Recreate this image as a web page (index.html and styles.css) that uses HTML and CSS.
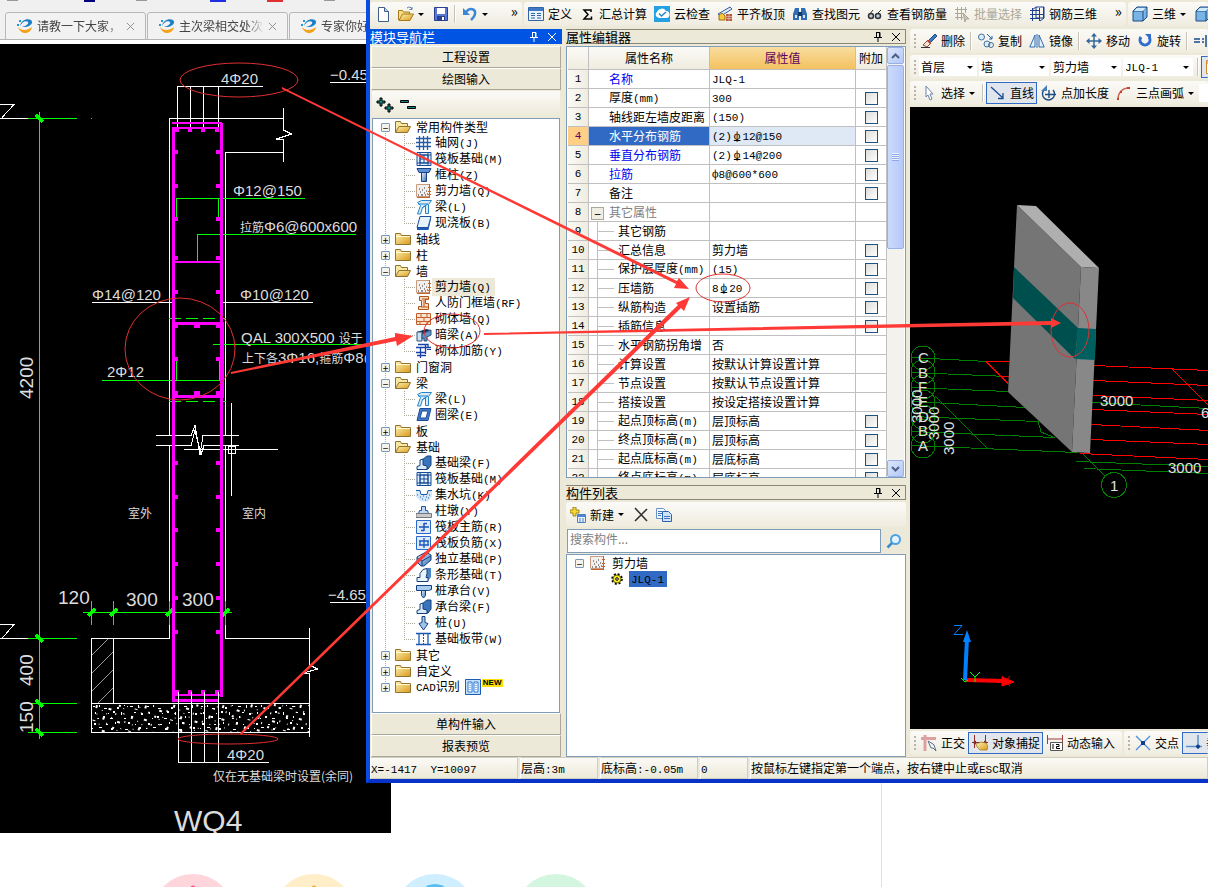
FILE: index.html
```html
<!DOCTYPE html>
<html lang="zh-CN">
<head>
    <meta charset="UTF-8">
    <meta name="viewport" content="width=device-width, initial-scale=1.0">
    <title>WQ4 剪力墙</title>
    <link rel="stylesheet" href="styles.css">
</head>
<body>

    <!-- Icon set -->
    <svg class="defs" width="0" height="0" aria-hidden="true">
        <defs>
            <linearGradient id="gold" x1="0" y1="0" x2="1" y2="1"><stop offset="0" stop-color="#fff3b0"/><stop offset="1" stop-color="#d99a1c"/></linearGradient>
            <linearGradient id="steel" x1="0" y1="0" x2="1" y2="1"><stop offset="0" stop-color="#eef7ff"/><stop offset="1" stop-color="#2c6fb8"/></linearGradient>
            <pattern id="concrete" width="54" height="29" patternUnits="userSpaceOnUse" x="91" y="703">
                <path fill="#fff" d="M2 3h2v1h-2zM8 2h1v2h-1zM13 5h3v1h-3zM26 4h2v2h-2zM33 2h1v1h-1zM39 3h3v1h-3zM47 2h1v3h-1zM4 9h1v2h-1zM17 10h1v1h-1zM22 8h2v2h-2zM30 9h1v3h-1zM43 9h2v1h-2zM50 10h2v2h-2zM7 15h1v1h-1zM12 13h2v2h-2zM19 15h3v1h-3zM33 15h2v1h-2zM40 13h1v2h-1zM3 20h2v2h-2zM15 21h2v1h-2zM24 19h1v2h-1zM37 19h2v2h-2zM44 21h1v1h-1zM1 25h1v1h-1zM8 24h3v1h-3zM20 25h2v2h-2zM34 26h3v1h-3zM48 24h2v2h-2z"/>
            </pattern>
            <pattern id="gravel" width="37" height="23" patternUnits="userSpaceOnUse" patternTransform="rotate(17)">
                <path fill="#fff" d="M2 2h2v3h-2zM9 5h1v1h-1zM15 1h3v2h-3zM23 4h1v2h-1zM30 2h2v1h-2zM5 10h1v1h-1zM12 11h2v3h-2zM20 9h1v1h-1zM27 11h3v2h-3zM34 9h1v2h-1zM3 17h3v1h-3zM10 19h1v1h-1zM17 16h1v2h-1zM24 18h2v2h-2zM32 17h1v1h-1zM14 7h1v1h-1zM7 14h1v1h-1zM29 20h1v1h-1z"/>
            </pattern>
            <pattern id="hatch" width="18" height="18" patternUnits="userSpaceOnUse" x="91" y="638">
                <path d="M0 18L18 0" stroke="#999" stroke-width="1"/>
            </pattern>
        </defs>
        <symbol id="i-brand" viewBox="0 0 16 16"><path d="M3 8C4 2 10 0 14 2c3 3-1 7-7 7H5c4-1 7-3 6-5-2-2-6 0-8 4z" fill="#1c7fc8"/><path d="M1 9c3 4 9 4 14 0-1 7-11 9-14 0z" fill="#f5a21b"/><path d="M0 6h2v2h-2zM2 2h2v2h-2z" fill="#1c9ad8"/></symbol>
        <symbol id="i-new" viewBox="0 0 16 16"><path d="M3.500 1.500h6l4 4v10h-10z" fill="#fff" stroke="#3f5f8a"/><path d="M9.500 1.500v4h4" fill="#bcd3ec" stroke="#3f5f8a"/></symbol>
        <symbol id="i-open" viewBox="0 0 16 16"><path d="M.5 14V4.500h4l1 1.500h6v3" fill="#f8df84" stroke="#a77a18"/><path d="M1 14.500L4.500 8h11l-3.500 6.500z" fill="url(#gold)" stroke="#a77a18"/><path d="M9 2c2-1.500 4-1 5 1m0-2v2.500h-2.500" fill="none" stroke="#5b7fa8"/></symbol>
        <symbol id="i-save" viewBox="0 0 16 16"><path d="M1.500 1.500h13v13h-13z" fill="#5a78d8" stroke="#29408f"/><path d="M4 2h8v6H4z" fill="#fff"/><path d="M4 10h8v4H4z" fill="#29408f"/><path d="M9 11h2v3H9z" fill="#fff"/></symbol>
        <symbol id="i-undo" viewBox="0 0 16 16"><path d="M1 2v7h7z" fill="#3a86d8"/><path d="M4 6c4-5 10-3 9 2-.5 3-2 4-4 6" fill="none" stroke="#3a86d8" stroke-width="2.500"/></symbol>
        <symbol id="i-define" viewBox="0 0 16 16"><path d="M.5 1.500h15v13H.5z" fill="#eaf2fb" stroke="#2f65a8"/><path d="M1 2h14v3H1z" fill="#3f78c4"/><path d="M3 7.500h4M3 9.500h4M3 12h4M9 7.500h4M9 9.500h4M9 12h4" stroke="#2f65a8"/></symbol>
        <symbol id="i-sigma" viewBox="0 0 16 16"><path d="M12 6V4H5l4 4.500L5 13h7.500v-2.500" fill="none" stroke="#000" stroke-width="1.500"/></symbol>
        <symbol id="i-cloud" viewBox="0 0 16 16"><path d="M0 0h16v16H0z" fill="#25a0e0"/><path d="M3 11a3 3 0 0 1 0-5 5 5 0 0 1 9-1 3.500 3.500 0 0 1 0 7H5z" fill="#fff"/><path d="M5 7.500l2.500 2.500L12 6" fill="none" stroke="#2a86c0" stroke-width="1.500"/></symbol>
        <symbol id="i-align" viewBox="0 0 16 16"><path d="M1 8L13 1l2 2L4 10z" fill="#dce9f8" stroke="#355f9a"/><path d="M2 14V9l3-2 3 3v4z" fill="#f3c83a" stroke="#9a6e10"/><path d="M9 8h6v7H9z" fill="#b9583c"/><path d="M9 10.500h6M9 12.500h6M12 8v7" stroke="#f2d2c4" stroke-width=".6"/></symbol>
        <symbol id="i-find" viewBox="0 0 16 16"><path d="M3 2h4v12H1V8zM13 2H9v12h6V8z" fill="#2f6cb4"/><path d="M6 6h4v4H6z" fill="#16375f"/><path d="M3 9h2v3H3zM11 9h2v3h-2z" fill="#d6e8fa"/></symbol>
        <symbol id="i-glasses" viewBox="0 0 16 16"><path d="M2 9l4-5M10 8l4-4" stroke="#333"/><circle cx="4" cy="10" r="2.500" fill="#bcd" stroke="#333" stroke-width="1.500"/><circle cx="11" cy="10" r="2.500" fill="#bcd" stroke="#333" stroke-width="1.500"/></symbol>
        <symbol id="i-batch" viewBox="0 0 16 16"><path d="M1 3.500h12M1 7.500h8M1 11.500h8M3.500 1v13M7.500 1v13M11.500 1v6" stroke="#aca899"/><path d="M9 7l6 6h-3l-1 3z" fill="#c8c4b4" stroke="#aca899"/></symbol>
        <symbol id="i-rebar" viewBox="0 0 16 16"><path d="M1 4.500h10M1 8.500h14M1 12.500h10M3.500 2v13M10.500 2v13M3 4l4-3h8v11l-4 3M14.500 1v11M7 1v11h8" fill="none" stroke="#1d3f8f"/></symbol>
        <symbol id="i-cube" viewBox="0 0 16 16"><path d="M1 5l4-4h10v10l-4 4H1z" fill="#78b4e6" stroke="#1d4d80"/><path d="M1 5h10v10M11 5l4-4" fill="none" stroke="#1d4d80"/><path d="M2 5l3-3h9l-3 3z" fill="#cfe8fa"/></symbol>
        <symbol id="i-pin" viewBox="0 0 10 10"><path d="M3 .5h4v5M3.500.5v5M1 5.500h8M5 6v4" fill="none" stroke="currentColor"/><path d="M6 1h1v4H6z" fill="currentColor"/></symbol>
        <symbol id="i-x" viewBox="0 0 10 10"><path d="M1 1l8 8M9 1L1 9" stroke="currentColor"/></symbol>
        <symbol id="i-folder" viewBox="0 0 16 16"><path d="M.5 13.500v-11h5l1 2h9v9z" fill="url(#gold)" stroke="#8f7430"/><path d="M1 5.500h14" stroke="#fff8d0"/></symbol>
        <symbol id="i-folder-open" viewBox="0 0 16 16"><path d="M.5 13.500v-11h5l1 2h6v3" fill="#f8e7a0" stroke="#8f7430"/><path d="M.5 13.500L4 7.500h11.500l-3 6z" fill="url(#gold)" stroke="#8f7430"/></symbol>
        <symbol id="i-grid" viewBox="0 0 16 16"><path d="M0 3.500h15M0 7.500h15M0 11.500h15M3.500 1v14M7.500 1v14M11.500 1v14" stroke="#255ca8" stroke-width="1.300"/></symbol>
        <symbol id="i-raft" viewBox="0 0 16 16"><path d="M1 1.500h14v13H1zM4 4h8v8H4zM4 1v14M12 1v14M1 4h14M1 12h14M8 4v8M4 8h8" fill="#e5f1fc" stroke="#174a94"/></symbol>
        <symbol id="i-column" viewBox="0 0 16 16"><path d="M1 1.500h14l-2 4H3z" fill="#5c93d6" stroke="#1c3f84"/><path d="M5.500 5.500h5v9h-5z" fill="url(#steel)" stroke="#1c3f84"/></symbol>
        <symbol id="i-wall" viewBox="0 0 16 16"><path d="M.5 1.500h13v12H.5z" fill="#f3efec" stroke="#c89c80"/><path d="M2 12h1M4 9h1M5 12h2M8 10h1M6 7h1M9 12h1M3 6h1M11 11h1M10 8h1M8 5h1" stroke="#333"/><path d="M1 14.500h13M13.500 1v14M12 4.500h3M12 8.500h3M12 11.500h3" stroke="#c4602c"/></symbol>
        <symbol id="i-beam" viewBox="0 0 16 16"><path d="M1.500 3.500l4-2h10l-3 4v9h-3v-8l-3 2-2 6.500h-3l3-8.500z" fill="#d7ecfb" stroke="#2384c8"/><path d="M2 5h10M6 9l6-4" stroke="#2384c8"/></symbol>
        <symbol id="i-slab" viewBox="0 0 16 16"><path d="M4 1.500h11l-3 11H1z" fill="#e6f2fc" stroke="#1d4d9a"/><path d="M1 13h11l3-11v2l-2.500 11H1z" fill="#1d5cb8"/></symbol>
        <symbol id="i-ring" viewBox="0 0 16 16"><path d="M4 1.500h11l-3 12H1z" fill="#3f7cc8" stroke="#1d4d9a"/><path d="M6 4h6l-2 7H4z" fill="#fff" stroke="#1d4d9a"/></symbol>
        <symbol id="i-gate" viewBox="0 0 16 16"><path d="M3.500 1.500h9v3h-3v4h3v6h-10v-3h3v-6h-2z" fill="#fbdcc0" stroke="#b0561c"/><path d="M6 4h6M5 12h7M8 5v7" stroke="#b0561c"/></symbol>
        <symbol id="i-brick" viewBox="0 0 16 16"><path d="M.5 2.500h14v11H.5z" fill="#fbe3cf" stroke="#c4602c"/><path d="M1 6.500h14M1 10.500h14M5 2v4M11 2v4M8 6v4M4 10v4M11 10v4" stroke="#c4602c"/></symbol>
        <symbol id="i-hidden" viewBox="0 0 16 16"><path d="M1 5l9-3 5 1-9 4z" fill="#16335e"/><path d="M1 5h5v9H1z" fill="#cfe2f4" stroke="#2c527f"/><path d="M6 7l9-4v5l-4 2v4H8v-3l-2 1z" fill="#5f92c6" stroke="#2c527f"/></symbol>
        <symbol id="i-tie" viewBox="0 0 16 16"><path d="M0 4.500h15M0 9.500h10M4.500 4v11M9.500 1v10M2 1.500h10v3M1 12.500h9" fill="none" stroke="#1740a8" stroke-width="1.300"/><path d="M11 6.500h4" stroke="#1740a8"/></symbol>
        <symbol id="i-found" viewBox="0 0 16 16"><path d="M6 14V5l5-4h4v9l-3 4z" fill="#3874bc" stroke="#163f7c"/><path d="M1 14.500v-3l3-1V5l3-1v6l4 1v3.500z" fill="#d9ebfa" stroke="#163f7c"/></symbol>
        <symbol id="i-pit" viewBox="0 0 16 16"><path d="M0 3.500h4l1 4h6l1-4h4v6l-4 5H5l-5-5z" fill="#d4e8fa"/><path d="M0 3.500h4l1 4h6l1-4h4" fill="none" stroke="#1c5ca8"/><path d="M1 8h1M4 10h1M7 9h1M10 10h1M13 8h1M6 12h1M9 13h1M12 11h1" stroke="#1c5ca8"/></symbol>
        <symbol id="i-pier" viewBox="0 0 16 16"><path d="M5.500 3.500h4v4h2l1 3h-10l1-3h2z" fill="#bcd8f4" stroke="#1d56a0"/><path d="M0 10.500h15.500v4H0z" fill="#c9c9c9" stroke="#777"/></symbol>
        <symbol id="i-main" viewBox="0 0 16 16"><path d="M.5 1.500h14v13H.5z" fill="#dceafc" stroke="#2a68c8"/><path d="M3 8h10M8 4v8M8 4.500h3M5 11.500h3" stroke="#1b56b8" stroke-width="1.500"/></symbol>
        <symbol id="i-neg" viewBox="0 0 16 16"><path d="M.5 1.500h14v13H.5z" fill="#dceafc" stroke="#2a68c8"/><path d="M3 6h10M3 10h10M8 3v10M4 6v4M12 6v4" stroke="#1b56b8" stroke-width="1.300"/></symbol>
        <symbol id="i-pad" viewBox="0 0 16 16"><path d="M1 6l9-5 5 3v5l-7 6H5L1 11z" fill="url(#steel)" stroke="#163f7c"/><path d="M1 7l5 3 9-5M5 3l4 3M6 10v5" fill="none" stroke="#163f7c"/></symbol>
        <symbol id="i-strip" viewBox="0 0 16 16"><path d="M9 2l3-1h3v9l-3 4z" fill="#4b85c8"/><path d="M1 14.500v-4h3v-4l3-4 4-1v5l-1 4h2v4z" fill="#eaf4fd" stroke="#163f7c"/></symbol>
        <symbol id="i-cap" viewBox="0 0 16 16"><path d="M.5 2.500h15v4l-3 1H.5z" fill="#a8cdf0" stroke="#163f7c"/><path d="M5.500 7.500h4v5l-2 2.500-2-2.500z" fill="url(#steel)" stroke="#163f7c"/></symbol>
        <symbol id="i-pile" viewBox="0 0 16 16"><path d="M6 1.500h3v6l3 1-2 3-2.500 3.500L5 11.500l-2-3 3-1z" fill="#9cc4ec" stroke="#163f7c"/></symbol>
        <symbol id="i-band" viewBox="0 0 16 16"><path d="M0 2.500h15M0 13.500h15M3 3v10M12 3v10" stroke="#1d56b0" stroke-width="1.300"/><path d="M7.500 3v10" stroke="#1d56b0" stroke-dasharray="2 1"/></symbol>
        <symbol id="i-cad" viewBox="0 0 16 16"><path d="M.5.5h15v15H.5z" fill="#c4e0fc" stroke="#1d5cb0"/><path d="M3 3h4v10H3zM9 3h4v10H9z" fill="#fff" stroke="#2d78d0"/><path d="M5 4v8M11 4v8" stroke="#2d78d0" stroke-dasharray="1 1"/></symbol>
        <symbol id="i-add" viewBox="0 0 16 16"><path d="M3 0h3v3h3v3H6v3H3V6H0V3h3z" fill="#f6d830" stroke="#8a7410" stroke-width=".8"/><path d="M7.500 7.500h8v8h-8z" fill="#e8f1fb" stroke="#4d7ec0"/><path d="M8 8h7v2H8z" fill="#4d86d8"/><path d="M9 12h2M12 12h2M9 14h2M12 14h2" stroke="#4d7ec0"/></symbol>
        <symbol id="i-delete" viewBox="0 0 16 16"><path d="M2 1l12 13M14 2L2 14" stroke="#333" stroke-width="1.600"/></symbol>
        <symbol id="i-pages" viewBox="0 0 16 16"><path d="M.5 1.500h7l2 2v8h-9z" fill="#f2f8ff" stroke="#6a94c8"/><path d="M6.500 4.500h6l3 3v7h-9z" fill="#cfe3fa" stroke="#2c62b0"/><path d="M2 4.500h4M2 6.500h4M2 8.500h3M8 9.500h6M8 11.500h6" stroke="#3f76c0"/></symbol>
        <symbol id="i-search" viewBox="0 0 16 16"><circle cx="9.500" cy="6.500" r="4.500" fill="#e4f4ff" stroke="#4ba3e0" stroke-width="2"/><path d="M6 10l-4.500 4.500" stroke="#3c8ad0" stroke-width="2.500"/></symbol>
        <symbol id="i-gear" viewBox="0 0 12 12"><circle cx="6" cy="6" r="4.800" fill="none" stroke="#000" stroke-width="2" stroke-dasharray="2 1.770"/><circle cx="6" cy="6" r="4" fill="#f4ec20" stroke="#6a6400"/><circle cx="6" cy="6" r="1.300" fill="#fff" stroke="#000"/></symbol>
        <symbol id="i-erase" viewBox="0 0 16 16"><path d="M6 9l8-8 2 2-8 8z" fill="#3f76c0" stroke="#234c88"/><path d="M2 12l5-5 3 3-4 4z" fill="#f4e4dc" stroke="#8c4a30"/><path d="M6 8l3 3 1-1-3-3z" fill="#d03c28"/><path d="M0 14.500h9" stroke="#333"/></symbol>
        <symbol id="i-copy" viewBox="0 0 16 16"><circle cx="3.500" cy="4" r="3" fill="#dcecf8" stroke="#45719c"/><circle cx="9" cy="11" r="3" fill="#dcecf8" stroke="#45719c"/><circle cx="13" cy="12" r="2.500" fill="none" stroke="#45719c"/><path d="M9 1l5 5m0-3v3h-3" fill="none" stroke="#2460a8"/></symbol>
        <symbol id="i-mirror" viewBox="0 0 16 16"><path d="M6 2v12H.8zM10 2v12h5.200z" fill="#e4f1fc" stroke="#2f6cb0"/><path d="M8 1v14" stroke="#2f6cb0"/></symbol>
        <symbol id="i-move" viewBox="0 0 16 16"><path d="M8 2v12M2 8h12" stroke="#33679c" stroke-width="1.500"/><path d="M8 0l3 3.500H5zM8 16l3-3.500H5zM0 8l3.500-3v6zM16 8l-3.500-3v6z" fill="#33679c"/></symbol>
        <symbol id="i-rotate" viewBox="0 0 16 16"><path d="M4 4a5 5 0 1 0 8 0" fill="none" stroke="#2f6ccc" stroke-width="3"/><path d="M8 1h6v6z" fill="#2f6ccc"/></symbol>
        <symbol id="i-extend" viewBox="0 0 16 16"><path d="M0 6h6M0 9h6M8 6h2M8 9h2M12 2v12" stroke="#164a8a" stroke-width="1.500"/></symbol>
        <symbol id="i-window" viewBox="0 0 16 16"><path d="M1.500 1.500h14v13h-14z" fill="#fff" stroke="#d8882c"/><path d="M2 2h13v3H2z" fill="#f6b858"/><path d="M4 9h8M4 12h8" stroke="#999"/></symbol>
        <symbol id="i-cursor" viewBox="0 0 16 16"><path d="M5 1l7 8H9l2 5-2 1-2-5-2 2z" fill="#fff" stroke="#6b85a8"/></symbol>
        <symbol id="i-line" viewBox="0 0 16 16"><path d="M1 2l12 11m0-5v5.500H8" fill="none" stroke="#1d4f98" stroke-width="1.300"/></symbol>
        <symbol id="i-length" viewBox="0 0 16 16"><path d="M3 5a6 6 0 1 0 9 0M8 5v8M4 9.500h11" fill="none" stroke="#1d4f88" stroke-width="1.400"/><path d="M0 6h6V0z" fill="#4a80b8"/></symbol>
        <symbol id="i-arc" viewBox="0 0 16 16"><path d="M2 14C2 8 6 3 13 3" fill="none" stroke="#c86a54" stroke-width="1.500"/><path d="M1 13h2v2H1zM4 6h2v2H4zM11 2h3v2h-3z" fill="#c83c28"/></symbol>
        <symbol id="i-ortho" viewBox="0 0 16 16"><path d="M0 3.500h15M4 0v16" stroke="#dca0a0" stroke-width="3"/><path d="M7 6l3 7 2 0 3 3-2-6-1-1z" fill="#eef4fa" stroke="#5c7088"/></symbol>
        <symbol id="i-snap" viewBox="0 0 16 16"><path d="M2.500 0v13M13.500 0v9M0 7.500h16" stroke="#8c2c2c"/><path d="M0 7.500l4-2v4zM16 7.500l-4-2v4z" fill="#8c2c2c"/><path d="M4 9l5-2 5 1 2 3-1 4H8l-3-3z" fill="url(#gold)" stroke="#8c6a18" stroke-width=".6"/></symbol>
        <symbol id="i-dyn" viewBox="0 0 16 16"><path d="M.5 0v9M15.500 0v9M0 4h16" stroke="#a03c3c"/><path d="M3.500 7.500h12v8h-12z" fill="#fff" stroke="#555"/><path d="M6 9v5M9 9.500h3v2H9.500v2H13" fill="none" stroke="#000"/></symbol>
        <symbol id="i-cross" viewBox="0 0 16 16"><path d="M1 1l14 14M15 1L1 15" stroke="#4a90dc" stroke-width="1.300"/><path d="M6 6h4v4H6z" fill="#123f8c"/></symbol>
        <symbol id="i-perp" viewBox="0 0 16 16"><path d="M12 0v14M0 11.500h16" stroke="#5a8ec8" stroke-width="1.500"/><circle cx="12" cy="11.500" r="2" fill="#123f8c"/></symbol>
    </svg>

    <!-- Browser page behind the application -->
    <div class="page">
        <div class="tab-strip">
            <div class="strip-icons"><i></i><i class="navy"></i><i></i><i class="blue"></i><i class="red"></i><i></i></div>
            <div class="tabs">
                <div class="tab"><svg class="icon"><use href="#i-brand"/></svg><span class="tab-title">请教一下大家，这</span><button class="tab-close" aria-label="关闭"><svg width="9" height="9"><use href="#i-x"/></svg></button></div>
                <div class="tab"><svg class="icon"><use href="#i-brand"/></svg><span class="tab-title">主次梁相交处次梁</span><button class="tab-close" aria-label="关闭"><svg width="9" height="9"><use href="#i-x"/></svg></button></div>
                <div class="tab"><svg class="icon"><use href="#i-brand"/></svg><span class="tab-title">专家你好</span><button class="tab-close" aria-label="关闭"><svg width="9" height="9"><use href="#i-x"/></svg></button></div>
            </div>
        </div>

        <!-- Section drawing WQ4 -->
        <svg class="drawing" width="391" height="789" viewBox="0 44 391 789">
            <rect y="44" width="391" height="789" fill="#000"/>
            <g class="white">
                <path d="M0 104.500h14L2 117.500M0 118.500h28M177.500 130V86.500h85M190.500 86v44M203.500 86v44M218.500 86v44"/>
                <path d="M169.500 435V118.500h114M283.500 108v22l8 4-15 5h7v23M225.500 435V152.500h57M169.500 445v193.500h-56M225.500 445v193.500h84M309.500 628v37l8 4-14 4h6v64"/>
                <path d="M92 302.500h81M221 302.500h92M330 82.500h40M330 602.500h40M156 435.500h35l4-10 5 29 3-19h36M156 445.500h35l4-15 6 24 3-9h35"/>
                <path d="M184 449.500h94M231.500 403v93M228.500 446.500h7v7h-7zM0 624.500h14L2 638.500M0 638.500h28M91.500 638.500h22v65M91.500 638v94.500h218M91 703.500h218"/>
            </g>
            <rect x="92" y="639" width="21" height="64" fill="url(#hatch)"/>
            <rect x="92" y="704" width="217" height="28" fill="url(#concrete)"/>
            <rect x="92" y="704" width="217" height="28" fill="url(#gravel)"/>
            <g class="green">
                <path d="M28 118.500h49M91 118.500h1M39.500 112v627M28 638.500h49M28 703.500h49M28 732.500h49M83 612.500h149M91.500 601v24M113.500 601v24M169.500 601v24M225.500 601v24"/>
                <path d="M176.500 218v-19.500h128M218.500 198v20M197.500 262v-27.500h158M213 344.500h157M102 380.500h117v-20M176.500 360v20"/>
                <path stroke-dasharray="12 5" d="M169 318.500h57M169 401.500h57"/>
                <path class="tick" d="M36 115l7 7M36 635l7 7M36 700l7 7M36 729l7 7M88 616l7-7M110 616l7-7M166 616l7-7M222 616l7-7"/>
            </g>
            <g class="magenta">
                <path d="M173 127v573h46M221.500 123v574M173 323.500h49v73h-49z"/>
                <path class="thin" d="M172 123h50M172 128h47M173 262h47M173 695h48"/>
                <path class="bars" d="M173 152h5M173 186h5M173 219h5M172 258h6M173 292h5M173 326h5M173 359h5M173 393h5M173 463h5M173 497h5M173 530h5M173 564h5M173 598h5M173 632h5M216 152h5M216 186h5M216 219h5M216 258h5M216 292h5M216 326h5M216 359h5M216 393h5M216 463h5M216 497h5M216 530h5M216 564h5M216 598h5M216 632h5M175 130h4M188 130h4M201 130h4M215 130h4M194 326h6M194 393h6M175 692h4M188 692h4M201 692h4M215 692h4"/>
            </g>
            <path class="white" d="M178.500 692v70.500h90M191.500 692v70M204.500 692v70M218.500 692v70"/>
            <g class="cad-text">
                <text x="221" y="84">4Φ20</text>
                <text x="330" y="80">−0.450</text>
                <text x="233" y="196">Φ12@150</text>
                <text x="240" y="232"><tspan class="cjk">拉筋</tspan>Φ6@600x600</text>
                <text x="92" y="300">Φ14@120</text>
                <text x="240" y="300">Φ10@120</text>
                <text x="241" y="343">QAL 300X500 <tspan class="cjk">设于</tspan></text>
                <text x="242" y="363"><tspan class="cjk">上下各</tspan>3Φ16,<tspan class="cjk">箍筋</tspan>Φ8@</text>
                <text x="107" y="377">2Φ12</text>
                <text x="128" y="518" class="cjk">室外</text>
                <text x="242" y="518" class="cjk">室内</text>
                <text x="328" y="600">−4.650</text>
                <text x="227" y="760">4Φ20</text>
                <text x="213" y="781" class="note">仅在无基础梁时设置(余同)</text>
                <text x="174" y="831" class="drawing-title">WQ4</text>
            </g>
            <g class="dims">
                <text x="58" y="604">120</text>
                <text x="126" y="606">300</text>
                <text x="182" y="606">300</text>
                <text transform="translate(33 399) rotate(-90)">4200</text>
                <text transform="translate(33 686) rotate(-90)">400</text>
                <text transform="translate(33 733) rotate(-90)">150</text>
            </g>
        </svg>

        <div class="shortcuts">
            <span class="dot pink"></span>
            <span class="dot cream"></span>
            <span class="dot sky"></span>
            <span class="dot mint"></span>
        </div>
    </div>

    <!-- Application window -->
    <div class="app">
        <div class="menu-row">
            <div class="bar bar-file">
                <button class="tool" aria-label="新建"><svg class="icon"><use href="#i-new"/></svg></button>
                <button class="tool drop" aria-label="打开"><svg class="icon"><use href="#i-open"/></svg></button>
                <button class="tool" aria-label="保存"><svg class="icon"><use href="#i-save"/></svg></button>
                <span class="sep"></span>
                <button class="tool drop" aria-label="撤销"><svg class="icon"><use href="#i-undo"/></svg></button>
                <button class="more" aria-label="更多">»</button>
            </div>
            <div class="bar bar-main">
                <button class="tool"><svg class="icon"><use href="#i-define"/></svg>定义</button>
                <button class="tool"><svg class="icon"><use href="#i-sigma"/></svg>汇总计算</button>
                <button class="tool"><svg class="icon"><use href="#i-cloud"/></svg>云检查</button>
                <button class="tool"><svg class="icon"><use href="#i-align"/></svg>平齐板顶</button>
                <button class="tool"><svg class="icon"><use href="#i-find"/></svg>查找图元</button>
                <button class="tool"><svg class="icon"><use href="#i-glasses"/></svg>查看钢筋量</button>
                <button class="tool" disabled><svg class="icon"><use href="#i-batch"/></svg>批量选择</button>
                <button class="tool"><svg class="icon"><use href="#i-rebar"/></svg>钢筋三维</button>
                <button class="more" aria-label="更多">»</button>
            </div>
            <div class="bar bar-view">
                <button class="tool drop"><svg class="icon"><use href="#i-cube"/></svg>三维</button>
                <button class="tool" aria-label="俯视"><svg class="icon"><use href="#i-cube"/></svg></button>
            </div>
        </div>

        <div class="work">
            <!-- Module navigator -->
            <div class="dock nav">
                <div class="dock-title active"><span>模块导航栏</span><button aria-label="固定"><svg width="10" height="10"><use href="#i-pin"/></svg></button><button aria-label="关闭"><svg width="10" height="10"><use href="#i-x"/></svg></button></div>
                <button class="section">工程设置</button>
                <button class="section">绘图输入</button>
                <div class="tree-tools">
                    <button aria-label="全部展开"><svg width="18" height="16" viewBox="0 0 18 16"><path d="M4 1h2v3h3v2H6v3H4V6H1V4h3zM12 7h2v3h3v2h-3v3h-2v-3H9v-2h3z" fill="#178080" stroke="#000"/></svg></button>
                    <button aria-label="全部折叠"><svg width="18" height="16" viewBox="0 0 18 16"><path d="M1.500 3.500h8v2h-8zM8.500 9.500h8v2h-8z" fill="#178080" stroke="#000"/></svg></button>
                </div>
                <ul class="tree">
                    <li>
                        <div class="group"><button class="expander" aria-label="折叠">−</button><svg class="icon"><use href="#i-folder-open"/></svg>常用构件类型</div>
                        <ul>
                            <li><svg class="icon"><use href="#i-grid"/></svg><span>轴网<kbd>(J)</kbd></span></li>
                            <li><svg class="icon"><use href="#i-raft"/></svg><span>筏板基础<kbd>(M)</kbd></span></li>
                            <li><svg class="icon"><use href="#i-column"/></svg><span>框柱<kbd>(Z)</kbd></span></li>
                            <li><svg class="icon"><use href="#i-wall"/></svg><span>剪力墙<kbd>(Q)</kbd></span></li>
                            <li><svg class="icon"><use href="#i-beam"/></svg><span>梁<kbd>(L)</kbd></span></li>
                            <li><svg class="icon"><use href="#i-slab"/></svg><span>现浇板<kbd>(B)</kbd></span></li>
                        </ul>
                    </li>
                    <li><div class="group"><button class="expander" aria-label="展开">+</button><svg class="icon"><use href="#i-folder"/></svg>轴线</div></li>
                    <li><div class="group"><button class="expander" aria-label="展开">+</button><svg class="icon"><use href="#i-folder"/></svg>柱</div></li>
                    <li>
                        <div class="group"><button class="expander" aria-label="折叠">−</button><svg class="icon"><use href="#i-folder-open"/></svg>墙</div>
                        <ul>
                            <li class="current"><svg class="icon"><use href="#i-wall"/></svg><span>剪力墙<kbd>(Q)</kbd></span></li>
                            <li><svg class="icon"><use href="#i-gate"/></svg><span>人防门框墙<kbd>(RF)</kbd></span></li>
                            <li><svg class="icon"><use href="#i-brick"/></svg><span>砌体墙<kbd>(Q)</kbd></span></li>
                            <li><svg class="icon"><use href="#i-hidden"/></svg><span>暗梁<kbd>(A)</kbd></span></li>
                            <li><svg class="icon"><use href="#i-tie"/></svg><span>砌体加筋<kbd>(Y)</kbd></span></li>
                        </ul>
                    </li>
                    <li><div class="group"><button class="expander" aria-label="展开">+</button><svg class="icon"><use href="#i-folder"/></svg>门窗洞</div></li>
                    <li>
                        <div class="group"><button class="expander" aria-label="折叠">−</button><svg class="icon"><use href="#i-folder-open"/></svg>梁</div>
                        <ul>
                            <li><svg class="icon"><use href="#i-beam"/></svg><span>梁<kbd>(L)</kbd></span></li>
                            <li><svg class="icon"><use href="#i-ring"/></svg><span>圈梁<kbd>(E)</kbd></span></li>
                        </ul>
                    </li>
                    <li><div class="group"><button class="expander" aria-label="展开">+</button><svg class="icon"><use href="#i-folder"/></svg>板</div></li>
                    <li>
                        <div class="group"><button class="expander" aria-label="折叠">−</button><svg class="icon"><use href="#i-folder-open"/></svg>基础</div>
                        <ul>
                            <li><svg class="icon"><use href="#i-found"/></svg><span>基础梁<kbd>(F)</kbd></span></li>
                            <li><svg class="icon"><use href="#i-raft"/></svg><span>筏板基础<kbd>(M)</kbd></span></li>
                            <li><svg class="icon"><use href="#i-pit"/></svg><span>集水坑<kbd>(K)</kbd></span></li>
                            <li><svg class="icon"><use href="#i-pier"/></svg><span>柱墩<kbd>(Y)</kbd></span></li>
                            <li><svg class="icon"><use href="#i-main"/></svg><span>筏板主筋<kbd>(R)</kbd></span></li>
                            <li><svg class="icon"><use href="#i-neg"/></svg><span>筏板负筋<kbd>(X)</kbd></span></li>
                            <li><svg class="icon"><use href="#i-pad"/></svg><span>独立基础<kbd>(P)</kbd></span></li>
                            <li><svg class="icon"><use href="#i-strip"/></svg><span>条形基础<kbd>(T)</kbd></span></li>
                            <li><svg class="icon"><use href="#i-cap"/></svg><span>桩承台<kbd>(V)</kbd></span></li>
                            <li><svg class="icon"><use href="#i-found"/></svg><span>承台梁<kbd>(F)</kbd></span></li>
                            <li><svg class="icon"><use href="#i-pile"/></svg><span>桩<kbd>(U)</kbd></span></li>
                            <li><svg class="icon"><use href="#i-band"/></svg><span>基础板带<kbd>(W)</kbd></span></li>
                        </ul>
                    </li>
                    <li><div class="group"><button class="expander" aria-label="展开">+</button><svg class="icon"><use href="#i-folder"/></svg>其它</div></li>
                    <li><div class="group"><button class="expander" aria-label="展开">+</button><svg class="icon"><use href="#i-folder"/></svg>自定义</div></li>
                    <li><div class="group"><button class="expander" aria-label="展开">+</button><svg class="icon"><use href="#i-folder"/></svg><span><kbd>CAD</kbd>识别</span><svg class="icon"><use href="#i-cad"/></svg><b class="new">NEW</b></div></li>
                </ul>
                <button class="section">单构件输入</button>
                <button class="section">报表预览</button>
            </div>

            <!-- Property editor and component list -->
            <div class="dock props">
                <div class="dock-title"><span>属性编辑器</span><button aria-label="固定"><svg width="10" height="10"><use href="#i-pin"/></svg></button><button aria-label="关闭"><svg width="10" height="10"><use href="#i-x"/></svg></button></div>
                <div class="grid-box">
                    <table class="grid">
                        <colgroup><col class="c-no"><col class="c-name"><col class="c-value"><col class="c-add"></colgroup>
                        <thead>
                            <tr><th></th><th>属性名称</th><th class="sorted">属性值</th><th>附加</th></tr>
                        </thead>
                        <tbody>
                            <tr><th>1</th><td class="key">名称</td><td><kbd>JLQ-1</kbd></td><td></td></tr>
                            <tr><th>2</th><td>厚度<kbd>(mm)</kbd></td><td><kbd>300</kbd></td><td><input type="checkbox" aria-label="厚度"></td></tr>
                            <tr><th>3</th><td>轴线距左墙皮距离</td><td><kbd>(150)</kbd></td><td><input type="checkbox" aria-label="轴线距左墙皮距离"></td></tr>
                            <tr class="selected"><th>4</th><td class="key">水平分布钢筋</td><td><kbd>(2)<u>ф</u>12@150</kbd></td><td><input type="checkbox" aria-label="水平分布钢筋"></td></tr>
                            <tr><th>5</th><td class="key">垂直分布钢筋</td><td><kbd>(2)<u>ф</u>14@200</kbd></td><td><input type="checkbox" aria-label="垂直分布钢筋"></td></tr>
                            <tr><th>6</th><td class="key">拉筋</td><td><kbd>ф8@600*600</kbd></td><td><input type="checkbox" aria-label="拉筋"></td></tr>
                            <tr><th>7</th><td>备注</td><td></td><td><input type="checkbox" aria-label="备注"></td></tr>
                            <tr class="parent"><th>8</th><td><button class="fold" aria-label="折叠">−</button>其它属性</td><td></td><td></td></tr>
                            <tr class="child"><th>9</th><td>其它钢筋</td><td></td><td></td></tr>
                            <tr class="child"><th>10</th><td>汇总信息</td><td>剪力墙</td><td><input type="checkbox" aria-label="汇总信息"></td></tr>
                            <tr class="child"><th>11</th><td>保护层厚度<kbd>(mm)</kbd></td><td><kbd>(15)</kbd></td><td><input type="checkbox" aria-label="保护层厚度"></td></tr>
                            <tr class="child"><th>12</th><td>压墙筋</td><td><kbd>8<u>ф</u>20</kbd></td><td><input type="checkbox" aria-label="压墙筋"></td></tr>
                            <tr class="child"><th>13</th><td>纵筋构造</td><td>设置插筋</td><td><input type="checkbox" aria-label="纵筋构造"></td></tr>
                            <tr class="child"><th>14</th><td>插筋信息</td><td></td><td><input type="checkbox" aria-label="插筋信息"></td></tr>
                            <tr class="child"><th>15</th><td>水平钢筋拐角增</td><td>否</td><td></td></tr>
                            <tr class="child"><th>16</th><td>计算设置</td><td>按默认计算设置计算</td><td></td></tr>
                            <tr class="child"><th>17</th><td>节点设置</td><td>按默认节点设置计算</td><td></td></tr>
                            <tr class="child"><th>18</th><td>搭接设置</td><td>按设定搭接设置计算</td><td></td></tr>
                            <tr class="child"><th>19</th><td>起点顶标高<kbd>(m)</kbd></td><td>层顶标高</td><td><input type="checkbox" aria-label="起点顶标高"></td></tr>
                            <tr class="child"><th>20</th><td>终点顶标高<kbd>(m)</kbd></td><td>层顶标高</td><td><input type="checkbox" aria-label="终点顶标高"></td></tr>
                            <tr class="child"><th>21</th><td>起点底标高<kbd>(m)</kbd></td><td>层底标高</td><td><input type="checkbox" aria-label="起点底标高"></td></tr>
                            <tr class="child"><th>22</th><td>终点底标高<kbd>(m)</kbd></td><td>层底标高</td><td><input type="checkbox" aria-label="终点底标高"></td></tr>
                        </tbody>
                    </table>
                    <div class="scroll">
                        <button aria-label="向上"><svg width="9" height="6"><path d="M1 5l3.500-3.500L8 5" fill="none" stroke="#4d6185" stroke-width="2"/></svg></button>
                        <div class="thumb"></div>
                        <button aria-label="向下"><svg width="9" height="6"><path d="M1 1l3.500 3.500L8 1" fill="none" stroke="#4d6185" stroke-width="2"/></svg></button>
                    </div>
                </div>

                <div class="dock-title second"><span>构件列表</span><button aria-label="固定"><svg width="10" height="10"><use href="#i-pin"/></svg></button><button aria-label="关闭"><svg width="10" height="10"><use href="#i-x"/></svg></button></div>
                <div class="bar list-tools">
                    <button class="tool drop"><svg class="icon"><use href="#i-add"/></svg>新建</button>
                    <button class="tool" aria-label="删除"><svg class="icon"><use href="#i-delete"/></svg></button>
                    <button class="tool" aria-label="复制"><svg class="icon"><use href="#i-pages"/></svg></button>
                </div>
                <div class="search">
                    <input type="text" aria-label="搜索构件" placeholder="搜索构件...">
                    <button aria-label="搜索"><svg class="icon"><use href="#i-search"/></svg></button>
                </div>
                <ul class="components">
                    <li><button class="expander" aria-label="折叠">−</button><svg class="icon"><use href="#i-wall"/></svg>剪力墙</li>
                    <li class="item"><svg width="12" height="12"><use href="#i-gear"/></svg><span class="picked"><kbd>JLQ-1</kbd></span></li>
                </ul>
            </div>

            <!-- Model view -->
            <div class="model">
                <div class="bar">
                    <span class="grip"></span>
                    <button class="tool"><svg class="icon"><use href="#i-erase"/></svg>删除</button>
                    <span class="sep"></span>
                    <button class="tool"><svg class="icon"><use href="#i-copy"/></svg>复制</button>
                    <button class="tool"><svg class="icon"><use href="#i-mirror"/></svg>镜像</button>
                    <span class="sep"></span>
                    <button class="tool"><svg class="icon"><use href="#i-move"/></svg>移动</button>
                    <button class="tool"><svg class="icon"><use href="#i-rotate"/></svg>旋转</button>
                    <span class="sep"></span>
                    <button class="tool" aria-label="延伸"><svg class="icon"><use href="#i-extend"/></svg></button>
                </div>
                <div class="bar">
                    <span class="grip"></span>
                    <label class="combo floor"><select aria-label="楼层"><option>首层</option></select></label>
                    <label class="combo"><select aria-label="构件大类"><option>墙</option></select></label>
                    <label class="combo"><select aria-label="构件类型"><option>剪力墙</option></select></label>
                    <label class="combo"><select class="latin" aria-label="构件"><option>JLQ-1</option></select></label>
                    <span class="sep"></span>
                    <button class="tool on" aria-label="属性"><svg class="icon"><use href="#i-window"/></svg></button>
                </div>
                <div class="bar">
                    <span class="grip"></span>
                    <button class="tool drop"><svg class="icon"><use href="#i-cursor"/></svg>选择</button>
                    <span class="sep"></span>
                    <button class="tool on"><svg class="icon"><use href="#i-line"/></svg>直线</button>
                    <button class="tool"><svg class="icon"><use href="#i-length"/></svg>点加长度</button>
                    <button class="tool drop"><svg class="icon"><use href="#i-arc"/></svg>三点画弧</button>
                    <label class="combo"><select aria-label="半径"><option></option></select></label>
                </div>
                <svg class="scene" viewBox="910 106 298 623" preserveAspectRatio="xMinYMin slice">
                    <g class="axis-green">
                        <path d="M911 356.500l76 4M911 371.500l97 4M911 386.500l97 4M911 400.500l114 6M911 415.500l127 5M911 430.500l144 6M911 444.500l166 7M935 395l52 52M1038 420l3 11 12 5M1092 401.500l116 6M1076 460.500l132 5M1084 467.500l124 5M1083 453l22 22"/>
                        <circle cx="923" cy="357" r="12"/><circle cx="923" cy="371" r="12"/><circle cx="923" cy="386" r="12"/><circle cx="923" cy="401" r="12"/><circle cx="923" cy="416" r="12"/><circle cx="923" cy="430" r="12"/><circle cx="923" cy="445" r="12"/>
                        <circle cx="1114" cy="484" r="12.500"/>
                    </g>
                    <path class="axis-red" d="M1009 360.500h-23l22 22M1001 375.500h8M1094 364.500l114 5M1093 379.500l115 5M1093 394.500l115 5M1092 408.500l116 5M1091 423.500l117 6M1091 438.500l117 5M1080 452.500l128 6M1172 368l36 36"/>
                    <path d="M1017 204L1081 266L1072 451L1008 391z" fill="#757575"/>
                    <path d="M1017 204L1036 205L1099 267L1081 266z" fill="#afafaf"/>
                    <path d="M1081 266L1099 267L1090 452L1072 451z" fill="#888"/>
                    <path d="M1014 266L1078 327L1075 358L1013 297z" fill="#004f4f"/>
                    <path d="M1078 327L1096 328L1095 359L1075 358z" fill="#006060"/>
                    <g class="scene-text">
                        <text x="1100" y="405">3000</text>
                        <text x="1168" y="472">3000</text>
                        <text x="1201" y="417">6</text>
                        <text x="1110" y="490">1</text>
                        <text x="918" y="362">C</text>
                        <text x="918" y="377">B</text>
                        <text x="918" y="391">F</text>
                        <text x="918" y="406">E</text>
                        <text x="918" y="421">D</text>
                        <text x="918" y="435">B</text>
                        <text x="918" y="450">A</text>
                        <text transform="translate(922 422) rotate(-90)">3000</text>
                        <text transform="translate(939 439) rotate(-90)">3000</text>
                        <text transform="translate(954 454) rotate(-90)">3000</text>
                    </g>
                    <path d="M965 679l39 1" stroke="#f00" stroke-width="4"/>
                    <path d="M1002 676l12 5-12 4zM1002 675l8 10M1010 675l-8 10" fill="#f00" stroke="#f00"/>
                    <path d="M965 679l2-42" stroke="#0080ff" stroke-width="4"/>
                    <path d="M963 641l4-12 4 12z" fill="#0080ff"/>
                    <path d="M954 624.500h8l-8 9h9" fill="none" stroke="#0080ff"/>
                    <path d="M970 671l5 5 5-5M975 676v5M961 677l4 4 3-2" fill="none" stroke="#0f0"/>
                </svg>
                <div class="model-foot">
                    <div class="bar">
                        <span class="grip"></span>
                        <button class="tool"><svg class="icon"><use href="#i-ortho"/></svg>正交</button>
                        <button class="tool on"><svg class="icon"><use href="#i-snap"/></svg>对象捕捉</button>
                        <button class="tool"><svg class="icon"><use href="#i-dyn"/></svg>动态输入</button>
                    </div>
                    <div class="bar">
                        <span class="grip"></span>
                        <button class="tool"><svg class="icon"><use href="#i-cross"/></svg>交点</button>
                        <button class="tool on"><svg class="icon"><use href="#i-perp"/></svg>垂点</button>
                    </div>
                </div>
            </div>
        </div>

        <div class="status">
            <span class="s-xy"><kbd>X=-1417&nbsp; Y=10097</kbd></span>
            <span class="s-floor">层高<kbd>:3m</kbd></span>
            <span class="s-base">底标高<kbd>:-0.05m</kbd></span>
            <span class="s-count"><kbd>0</kbd></span>
            <span class="s-hint">按鼠标左键指定第一个端点，按右键中止或<kbd>ESC</kbd>取消</span>
        </div>
    </div>

    <!-- Red marks linking the drawing to the software -->
    <svg class="marks" width="1208" height="887">
        <ellipse cx="239" cy="80" rx="59" ry="17"/>
        <ellipse cx="180" cy="349" rx="55" ry="51"/>
        <ellipse cx="228" cy="739" rx="50" ry="5"/>
        <ellipse cx="452" cy="331" rx="28" ry="17"/>
        <ellipse cx="723" cy="288" rx="27" ry="14"/>
        <ellipse cx="1070" cy="330" rx="19" ry="27"/>
        <path d="M282 87L677 281L679 278L689 289L674 288L676 284L282 89z"/>
        <path d="M231 372L395 337L395 333L413 336L397 346L396 341L231 374z"/>
        <path d="M484 333L1051 321L1051 318L1061 323L1051 328L1051 325L484 335z"/>
        <path d="M240 733L678 305L676 303L690 297L684 311L681 308L241 735z"/>
    </svg>

</body>
</html>
```
FILE: styles.css
```css
* {
    box-sizing: border-box;
}

body {
    margin: 0;
    height: 100vh;
    overflow: hidden;
    position: relative;
    background-color: #fff;
    font-family: "Noto Sans CJK SC", sans-serif;
    font-size: 12px;
    line-height: 16px;
    color: #000;
}

button, select, input {
    font: inherit;
    color: inherit;
    margin: 0;
}

button {
    display: inline-flex;
    align-items: center;
    justify-content: center;
    padding: 0;
    border: none;
    background: none;
    white-space: nowrap;
}

ul {
    list-style: none;
    margin: 0;
    padding: 0;
}

kbd {
    font-family: "Liberation Mono", monospace;
    font-size: 11px;
}

.defs {
    position: absolute;
}

.icon {
    width: 16px;
    height: 16px;
    flex: none;
}

/* Browser page */
.page {
    display: flex;
    flex-direction: column;
    width: 73%;
    height: 100%;
    border-right: 1px solid #e0e0e0;
    overflow: hidden;
}

.tab-strip {
    flex: none;
    height: 40px;
    margin-bottom: 4px;
    background-color: #f0f0f0;
    border-bottom: 1px solid #b4b4b4;
    overflow: hidden;
}

.strip-icons {
    display: flex;
    gap: 41px;
    height: 12px;
    padding-left: 7px;
}

.strip-icons i {
    width: 11px;
    height: 1px;
    background-color: #999;
}

.strip-icons .navy {
    height: 2px;
    background-color: #000080;
    margin-left: 25px;
}

.strip-icons .blue {
    width: 16px;
    height: 2px;
    background-color: #2030e0;
    margin-left: 22px;
}

.strip-icons .red {
    width: 16px;
    height: 2px;
    background-color: #e03030;
}

.tabs {
    display: flex;
    gap: 1px;
    padding-left: 5px;
}

.tab {
    display: flex;
    align-items: center;
    gap: 4px;
    flex: none;
    width: 141px;
    height: 28px;
    padding: 0 10px 0 11px;
    background-color: #f2f2f2;
    border: 1px solid #b8b8b8;
    border-radius: 3px 3px 0 0;
    color: #444;
}

.tab-title {
    flex: 1;
    overflow: hidden;
    white-space: nowrap;
    -webkit-mask-image: linear-gradient(90deg, #000 80%, transparent);
}

.tab-close {
    color: #888;
}

.drawing {
    display: block;
    flex: none;
}

.white, .green, .magenta {
    fill: none;
    stroke: #fff;
    shape-rendering: crispEdges;
}

.green {
    stroke: #0f0;
}

.green .tick {
    stroke-width: 3;
}

.magenta {
    stroke: #f0f;
    stroke-width: 3;
}

.magenta .thin {
    stroke-width: 2;
}

.magenta .bars {
    stroke-width: 4;
}

.cad-text, .dims {
    fill: #dcdcdc;
    font-family: "Liberation Sans", "Noto Sans CJK SC", sans-serif;
    font-size: 15px;
}

.dims {
    font-size: 19px;
}

.cad-text .cjk {
    font-family: "Noto Sans CJK SC", sans-serif;
    font-size: 12px;
}

.cad-text .note {
    font-family: "Noto Sans CJK SC", sans-serif;
    font-size: 12px;
}

.cad-text .drawing-title {
    font-size: 30px;
}

.shortcuts {
    flex: 1;
    display: flex;
    gap: 39px;
    min-height: 0;
    margin-top: 41px;
    padding-left: 152px;
    overflow: hidden;
}

.dot {
    flex: none;
    width: 82px;
    height: 82px;
    border-radius: 50%;
}

.pink {
    background: radial-gradient(circle at 50% 14px, #ff5878 2px, #ffd5dc 3px);
}

.cream {
    background: radial-gradient(circle at 50% 14px, #f0b030 2px, #ffeec8 3px);
}

.sky {
    background: radial-gradient(ellipse 10px 3px at 50% 13px, #58bdf0 80%, #cfeeff);
}

.mint {
    background-color: #d4f6e0;
}

/* Application window */
.app {
    position: absolute;
    top: 0;
    right: 0;
    bottom: 104px;
    left: 366px;
    display: flex;
    flex-direction: column;
    background-color: #ece9d8;
    border-left: 4px solid #0a4be0;
    border-bottom: 4px solid #0831c8;
    overflow: hidden;
}

.bar {
    display: flex;
    align-items: center;
    background: linear-gradient(#fbfaf7, #efecdf);
    border-radius: 3px;
    overflow: hidden;
}

.menu-row {
    display: flex;
    gap: 2px;
    height: 29px;
    padding: 2px 0 3px;
}

.bar-file {
    width: 152px;
    padding-left: 1px;
}

.bar-main {
    width: 602px;
}

.bar-view {
    flex: 1;
}

.tool {
    flex: none;
    gap: 4px;
    height: 22px;
    padding: 0 2px 0 3px;
    border: 1px solid transparent;
}

.tool:hover, .tool.on {
    background-color: #e1e6ec;
    border-color: #316ac5;
}

.tool:disabled {
    color: #aca899;
    background: none;
    border-color: transparent;
}

.drop::after {
    content: "";
    margin-right: 2px;
    border: 3px solid transparent;
    border-top-color: #000;
    border-bottom: none;
}

.bar-main .more, .bar-file .more {
    margin-left: auto;
    padding: 0 4px 6px;
    font-size: 15px;
}

.sep {
    flex: none;
    width: 2px;
    height: 18px;
    margin: 0 2px;
    border-left: 1px solid #c5c2b8;
    border-right: 1px solid #fff;
}

.grip {
    flex: none;
    width: 2px;
    height: 15px;
    margin: 0 1px 0 4px;
    background: repeating-linear-gradient(#b8b4a6 0 2px, transparent 2px 4px);
}

.work {
    flex: 1;
    min-height: 0;
    display: flex;
    gap: 4px;
}

.dock {
    display: flex;
    flex-direction: column;
    flex: none;
}

.nav {
    width: 192px;
}

.props {
    width: 340px;
}

.dock-title {
    flex: none;
    display: flex;
    align-items: center;
    gap: 8px;
    height: 15px;
    padding-right: 4px;
    border: 1px solid #8a8778;
    border-left: none;
    font-size: 13px;
    line-height: 13px;
}

.dock-title span {
    flex: 1;
}

.dock-title.active {
    background-color: #0054e3;
    border-color: #0054e3;
    color: #fff;
    margin-bottom: 2px;
}

.dock-title.second {
    margin: 7px 0 2px;
}

.section {
    flex: none;
    height: 22px;
    margin: 0 1px;
    background-color: #ece9d8;
    border: 1px solid #fff;
    border-right-color: #aca899;
    border-bottom-color: #aca899;
}

.tree-tools {
    flex: none;
    display: flex;
    align-items: center;
    gap: 5px;
    height: 27px;
    margin: 1px 2px 0;
    padding-left: 4px;
    background: linear-gradient(#fbfaf7, #ece9d8);
}

.tree {
    flex: 1;
    min-height: 0;
    margin: 0 2px;
    background-color: #fff;
    border: 1px solid #7f9db9;
    overflow: hidden;
    white-space: nowrap;
}

.tree > li {
    padding-left: 8px;
    background: repeating-linear-gradient(#aca899 0 1px, transparent 1px 2px) 12px 0 / 1px 100% no-repeat;
}

.tree > li:first-child {
    background-position: 12px 8px;
}

.tree > li:last-child {
    background-size: 1px 8px;
}

.group {
    display: flex;
    align-items: center;
    gap: 5px;
    height: 16px;
}

.expander {
    flex: none;
    width: 9px;
    height: 9px;
    border: 1px solid #7898b5;
    border-radius: 1px;
    background-color: #f4f2ea;
    font-size: 10px;
    line-height: 7px;
}

.tree ul li {
    display: flex;
    align-items: center;
    height: 16px;
    margin-left: 23px;
}

.tree ul li::before {
    content: "";
    width: 11px;
    height: 16px;
    margin-right: 1px;
    background:
        repeating-linear-gradient(90deg, #aca899 0 1px, transparent 1px 2px) 0 8px / 100% 1px no-repeat,
        repeating-linear-gradient(#aca899 0 1px, transparent 1px 2px) 0 0 / 1px 100% no-repeat;
}

.tree ul li:last-child::before {
    background-size: 100% 1px, 1px 8px;
}

.tree ul li span {
    padding: 0 4px 0 3px;
}

.tree .current span {
    background-color: #ece9d8;
}

.new {
    align-self: flex-start;
    margin-left: -4px;
    padding: 0 1px;
    background-color: #ffe000;
    font-family: "Liberation Sans", sans-serif;
    font-size: 8px;
    line-height: 8px;
}

/* Property grid */
.grid-box {
    flex: none;
    display: flex;
    height: 432px;
    margin-top: 2px;
    padding: 0 1px;
    background-color: #fff;
    border: 1px solid #7f9db9;
    overflow: hidden;
}

.grid {
    flex: 1;
    align-self: flex-start;
    table-layout: fixed;
    border-spacing: 0;
}

.c-no {
    width: 21px;
}

.c-name {
    width: 121px;
}

.c-add {
    width: 31px;
}

.grid th, .grid td {
    height: 19px;
    padding: 0 2px;
    border-right: 1px solid #c0c0c0;
    border-bottom: 1px solid #c0c0c0;
    font-weight: normal;
    line-height: 16px;
    text-align: left;
    white-space: nowrap;
    overflow: hidden;
}

.grid thead th {
    height: 23px;
    padding: 0;
    background: linear-gradient(#fbfaf6, #efecdf);
    text-align: center;
}

.grid thead .sorted {
    background: linear-gradient(#f9dda0, #f3c15f);
    color: #600060;
}

.grid tbody th {
    padding: 0;
    background: linear-gradient(90deg, #fbfaf6, #efecdf);
    font-family: "Liberation Mono", monospace;
    font-size: 11px;
    text-align: center;
}

.grid td:nth-child(2) {
    padding-left: 20px;
}

.grid td:last-child {
    padding: 0 0 0 9px;
}

.grid .key {
    color: #0000f0;
}

.grid .selected th {
    background: #ffcf86;
    color: #600060;
}

.grid .selected .key {
    background-color: #316ac5;
    color: #fff;
}

.grid .selected td:nth-child(3) {
    background-color: #dfe8f5;
}

/* ribbed bar grade sign */
.grid u {
    padding: 0 2px;
    text-decoration-skip-ink: none;
    text-underline-offset: 0;
}

.grid .parent td {
    padding-left: 2px;
    color: #808080;
}

.fold {
    width: 13px;
    height: 13px;
    margin-right: 5px;
    border: 1px solid #aca899;
    background-color: #f0ede2;
    color: #000;
    line-height: 10px;
    vertical-align: middle;
}

.grid .child td:nth-child(2) {
    padding-left: 29px;
    background:
        linear-gradient(#c0c0c0, #c0c0c0) 8px 0 / 1px 100% no-repeat,
        linear-gradient(#c0c0c0, #c0c0c0) 8px 9px / 17px 1px no-repeat;
}

.grid input {
    display: block;
    appearance: none;
    width: 13px;
    height: 13px;
    background: linear-gradient(135deg, #dcdcd7, #fff);
    border: 1px solid #1c5180;
}

.scroll {
    flex: none;
    display: flex;
    flex-direction: column;
    gap: 1px;
    width: 17px;
    background-color: #f3f2ec;
}

.scroll button {
    flex: none;
    height: 17px;
    background: linear-gradient(135deg, #dbe6fd, #b4c8f6);
    border: 1px solid #98b0e8;
    border-radius: 2px;
}

.scroll button:last-child {
    margin-top: auto;
}

.thumb {
    height: 184px;
    background:
        repeating-linear-gradient(#eef4fe 0 1px, #8ca8e8 1px 2px) 50% 50% / 7px 8px no-repeat,
        linear-gradient(90deg, #cbdafd, #b6c9f8);
    border: 1px solid #98b0e8;
    border-radius: 2px;
}

/* Component list */
.list-tools {
    flex: none;
    height: 25px;
    margin-bottom: 2px;
}

.search {
    flex: none;
    display: flex;
    height: 24px;
    margin: 0 0 1px 1px;
}

.search input {
    flex: 1;
    padding: 0 2px 4px;
    background-color: #fff;
    border: 1px solid #7f9db9;
}

.search input::placeholder {
    color: #808080;
}

.search button {
    width: 25px;
}

.components {
    flex: 1;
    background-color: #fff;
    border: 1px solid #7f9db9;
    padding: 0 8px;
}

.components li {
    display: flex;
    align-items: center;
    gap: 6px;
    height: 16px;
}

.components .item {
    padding-left: 36px;
}

.picked {
    padding: 0 3px 0 2px;
    background-color: #316ac5;
    line-height: 14px;
}

/* Model view */
.model {
    flex: 1;
    min-width: 0;
    display: flex;
    flex-direction: column;
    gap: 2px;
}

.model .bar {
    flex: none;
    height: 24px;
}

.combo {
    position: relative;
    flex: none;
    width: 70px;
    height: 18px;
    margin-right: 2px;
    background-color: #fff;
}

.combo.floor {
    width: 58px;
    margin-left: 2px;
}

.combo select {
    appearance: none;
    width: 100%;
    height: 18px;
    padding: 0 2px;
    border: none;
    background: none;
    line-height: 16px;
}

.combo .latin {
    font-family: "Liberation Mono", monospace;
    font-size: 11px;
}

.combo::after {
    content: "";
    position: absolute;
    right: 4px;
    top: 8px;
    border: 3px solid transparent;
    border-top-color: #000;
    border-bottom: none;
    pointer-events: none;
}

.scene {
    flex: 1;
    min-height: 0;
    width: 100%;
    background-color: #000;
}

.axis-green, .axis-red {
    fill: none;
    stroke: #008000;
    shape-rendering: crispEdges;
}

.axis-red {
    stroke: #f00;
}

.scene-text {
    fill: #e0e0e0;
    font-family: "Liberation Sans", sans-serif;
    font-size: 15px;
}

.model-foot {
    flex: none;
    display: flex;
    gap: 2px;
    padding-bottom: 2px;
}

.model-foot .bar:first-child {
    padding-right: 4px;
}

.model-foot .bar:last-child {
    flex: 1;
}

/* Status bar */
.status {
    flex: none;
    display: flex;
    gap: 2px;
    height: 22px;
    white-space: nowrap;
}

.status span {
    flex: none;
    padding: 2px 0;
    border: 1px solid #d0cdbd;
    border-left-color: #fff;
    background: linear-gradient(#fbfaf6, #ece9d8);
}

.status .s-xy {
    width: 148px;
}

.status .s-floor {
    width: 78px;
}

.status .s-base {
    width: 98px;
}

.status .s-count {
    width: 48px;
}

.status .s-hint {
    flex: 1;
}

/* Red marks */
.marks {
    position: absolute;
    top: 0;
    left: 0;
    pointer-events: none;
}

.marks ellipse {
    fill: none;
    stroke: #e03030;
}

.marks path {
    fill: #ff3a36;
}
```
